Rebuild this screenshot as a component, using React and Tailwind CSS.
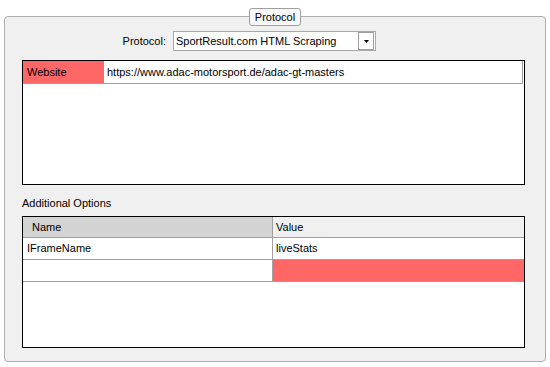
export default function App() {
  return (
    <div className="w-[550px] h-[367px] bg-white pt-[16px] pl-[4px] text-[11px] text-black" style={{ fontFamily: '"Liberation Sans", Arial, sans-serif' }}>
      <div className="relative w-[542px] h-[346px] rounded-[4px] border border-[#adadad] bg-[#f0f0f0]">
        {/* group title */}
        <div className="absolute left-[244px] top-[-9px] w-[52px] h-[18px] rounded-[3px] border border-[#a0a0a0] bg-[#f7f7f7] flex items-center justify-center leading-none">
          Protocol
        </div>

        {/* protocol selector */}
        <div className="flex items-center pl-[103px] mt-[14px]">
          <span className="w-[61px] text-right pr-[3px]">Protocol:</span>
          <div className="ml-[4px] w-[203px] h-[20px] border border-[#a8a8a8] bg-white flex items-center justify-between pl-[2px] pr-[1px]">
            <span>SportResult.com HTML Scraping</span>
            <div className="w-[16px] h-[18px] border border-[#a0a0a0] bg-white flex items-center justify-center">
              <svg width="5" height="3" viewBox="0 0 5 3">
                <path d="M0 0 H5 L2.5 3 Z" fill="#000" />
              </svg>
            </div>
          </div>
        </div>

        {/* website grid */}
        <div className="ml-[17px] mt-[9px] w-[503px] h-[125px] border border-black bg-white">
          <div className="w-[500px] h-[23px] flex border-r border-b border-[#a0a0a0]">
            <div className="w-[81px] bg-[#ff6666] pl-[4px] flex items-center">Website</div>
            <div className="pl-[3px] flex items-center">https://www.adac-motorsport.de/adac-gt-masters</div>
          </div>
        </div>

        <div className="ml-[17px] mt-[12px] h-[13px] leading-[13px]">Additional Options</div>

        {/* options grid */}
        <div className="ml-[17px] mt-[6px] w-[503px] h-[132px] border border-black bg-white">
          <div className="flex h-[21px] border-b border-[#a0a0a0]">
            <div className="w-[250px] bg-[#d3d3d3] border-r border-[#a0a0a0] pl-[9px] flex items-center">Name</div>
            <div className="flex-1 bg-[#f0f0f0] pl-[3px] flex items-center">Value</div>
          </div>
          <div className="flex h-[22px] border-b border-[#a0a0a0]">
            <div className="w-[250px] border-r border-[#a0a0a0] pl-[4px] flex items-center">IFrameName</div>
            <div className="flex-1 pl-[3px] flex items-center">liveStats</div>
          </div>
          <div className="flex h-[22px] border-b border-[#a0a0a0]">
            <div className="w-[250px] border-r border-[#a0a0a0]"></div>
            <div className="flex-1 bg-[#ff6666]"></div>
          </div>
        </div>
      </div>
    </div>
  )
}
